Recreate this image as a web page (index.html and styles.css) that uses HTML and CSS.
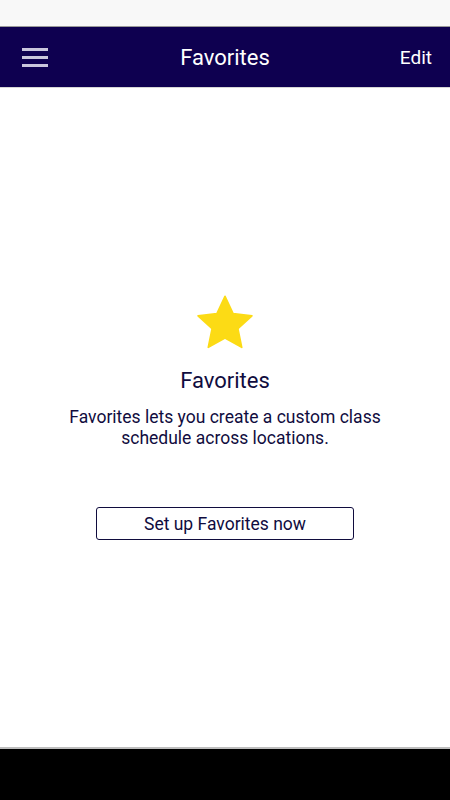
FILE: index.html
```html
<!DOCTYPE html>
<html>
<head>
<meta charset="utf-8">
<link rel="stylesheet" href="styles.css">
</head>
<body>
<div class="screen">
  <div class="statusbar"></div>
  <header class="appbar">
    <button class="menu" aria-label="Menu">
      <span></span><span></span><span></span>
    </button>
    <h1 class="title">Favorites</h1>
    <span class="edit">Edit</span>
  </header>
  <main class="content">
    <svg class="star" viewBox="0 0 24 24" width="68" height="68">
      <path d="M12 2.6l2.85 6.1 6.65.75-4.95 4.55 1.35 6.6L12 17.3l-5.9 3.3 1.35-6.6L2.5 9.45l6.65-.75z" fill="#fcdb15" stroke="#fcdb15" stroke-width="0.6" stroke-linejoin="round"/>
    </svg>
    <h2 class="heading">Favorites</h2>
    <p class="desc">Favorites lets you create a custom class<br>schedule across locations.</p>
    <button class="setup">Set up Favorites now</button>
  </main>
  <div class="navbar"></div>
</div>
</body>
</html>
```
FILE: styles.css
```css
* { box-sizing: border-box; }
html, body { margin: 0; padding: 0; }
body { font-family: Roboto, "Noto Sans", sans-serif; background: #fff; }
.screen { width: 450px; height: 800px; display: flex; flex-direction: column; }
.statusbar { height: 27px; background: #f8f8f8; border-bottom: 1px solid #9a9a9a; flex: none; }
.appbar {
  height: 61px; flex: none; background: #0e0050;
  display: flex; align-items: center; justify-content: space-between;
  padding: 0 18px 0 22px; position: relative;
  border-bottom: 1px solid #d6d6d6;
}
.menu {
  width: 26px; height: 19px; padding: 0; margin: 0; background: none; border: 0;
  display: flex; flex-direction: column; justify-content: space-between;
}
.menu span { display: block; height: 3px; width: 26px; background: #c9c6dc; }
.title {
  position: absolute; left: 0; right: 0; text-align: center; margin: 0;
  font-weight: 400; font-size: 22px; color: #fff; pointer-events: none;
}
.edit { color: #fff; font-size: 19px; }
.content {
  flex: 1; display: flex; flex-direction: column; align-items: center;
  padding-top: 201px; color: #100c3e;
}
.star { display: block; }
.heading { margin: 11px 0 0; font-weight: 400; font-size: 22px; line-height: 26px; }
.desc { margin: 13px 0 0; text-align: center; font-size: 17.5px; line-height: 21px; }
.setup {
  margin-top: 58px; width: 258px; height: 33px; background: #fff;
  border: 1px solid #100c3e; border-radius: 3px;
  font-family: Roboto, sans-serif; font-size: 17.5px; color: #100c3e;
}
.navbar { height: 53px; flex: none; background: #000; border-top: 2px solid #bdbdbd; }
```
